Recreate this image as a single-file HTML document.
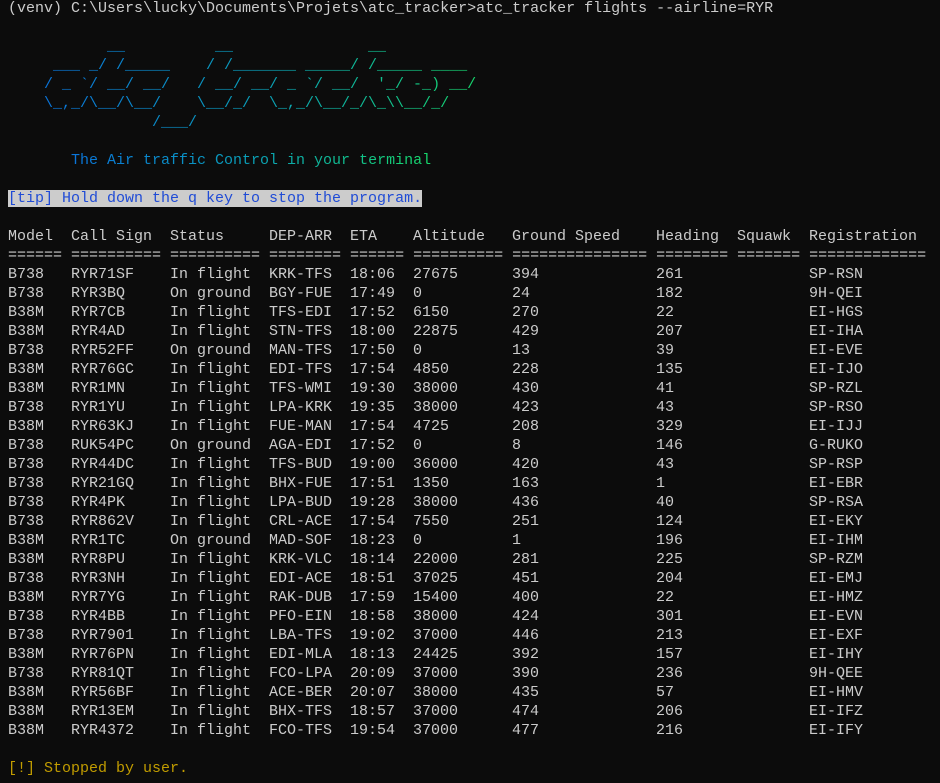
<!DOCTYPE html>
<html><head><meta charset="utf-8"><style>
html,body{margin:0;padding:0;background:#0c0c0c;}
body{width:940px;height:783px;overflow:hidden;}
.t{position:absolute;left:8px;top:-1px;font-family:"Liberation Mono",monospace;font-size:15px;line-height:19px;color:#cccccc;white-space:normal;}
.l{height:19px;white-space:pre;}
.g{background:linear-gradient(90deg,#0a74da 0%,#0aa0b8 50%,#17d86a 100%);-webkit-background-clip:text;background-clip:text;color:transparent;display:inline-block;white-space:pre;}
.tip{background:#cccccc;color:#1f4bd6;}
.r span{display:inline-block;}
.a{width:63px}.b{width:99px}.c{width:99px}.d{width:81px}.e{width:63px}.f{width:99px}.h{width:144px}.i{width:81px}.j{width:72px}
.y{color:#c19c00;}
</style></head><body><div class="t"><div class="l">(venv) C:\Users\lucky\Documents\Projets\atc_tracker&gt;atc_tracker flights --airline=RYR</div><div class="l"></div><div class="g" style="margin-left:36px;width:440px;display:block;">       __          __               __
 ___ _/ /_____    / /_______ _____/ /_____ ____
/ _ `/ __/ __/   / __/ __/ _ `/ __/  '_/ -_) __/
\_,_/\__/\__/    \__/_/  \_,_/\__/_/\_\\__/_/
            /___/</div><div class="l"></div><div class="l">       <span class="g">The Air traffic Control in your terminal</span></div><div class="l"></div><div class="l"><span class="tip">[tip] Hold down the q key to stop the program.</span></div><div class="l"></div><div class="l r"><span class="a">Model</span><span class="b">Call Sign</span><span class="c">Status</span><span class="d">DEP-ARR</span><span class="e">ETA</span><span class="f">Altitude</span><span class="h">Ground Speed</span><span class="i">Heading</span><span class="j">Squawk</span><span>Registration</span></div><div class="l">====== ========== ========== ======== ====== ========== =============== ======== ======= =============</div><div class="l r"><span class="a">B738</span><span class="b">RYR71SF</span><span class="c">In flight</span><span class="d">KRK-TFS</span><span class="e">18:06</span><span class="f">27675</span><span class="h">394</span><span class="i">261</span><span class="j"></span><span>SP-RSN</span></div><div class="l r"><span class="a">B738</span><span class="b">RYR3BQ</span><span class="c">On ground</span><span class="d">BGY-FUE</span><span class="e">17:49</span><span class="f">0</span><span class="h">24</span><span class="i">182</span><span class="j"></span><span>9H-QEI</span></div><div class="l r"><span class="a">B38M</span><span class="b">RYR7CB</span><span class="c">In flight</span><span class="d">TFS-EDI</span><span class="e">17:52</span><span class="f">6150</span><span class="h">270</span><span class="i">22</span><span class="j"></span><span>EI-HGS</span></div><div class="l r"><span class="a">B38M</span><span class="b">RYR4AD</span><span class="c">In flight</span><span class="d">STN-TFS</span><span class="e">18:00</span><span class="f">22875</span><span class="h">429</span><span class="i">207</span><span class="j"></span><span>EI-IHA</span></div><div class="l r"><span class="a">B738</span><span class="b">RYR52FF</span><span class="c">On ground</span><span class="d">MAN-TFS</span><span class="e">17:50</span><span class="f">0</span><span class="h">13</span><span class="i">39</span><span class="j"></span><span>EI-EVE</span></div><div class="l r"><span class="a">B38M</span><span class="b">RYR76GC</span><span class="c">In flight</span><span class="d">EDI-TFS</span><span class="e">17:54</span><span class="f">4850</span><span class="h">228</span><span class="i">135</span><span class="j"></span><span>EI-IJO</span></div><div class="l r"><span class="a">B38M</span><span class="b">RYR1MN</span><span class="c">In flight</span><span class="d">TFS-WMI</span><span class="e">19:30</span><span class="f">38000</span><span class="h">430</span><span class="i">41</span><span class="j"></span><span>SP-RZL</span></div><div class="l r"><span class="a">B738</span><span class="b">RYR1YU</span><span class="c">In flight</span><span class="d">LPA-KRK</span><span class="e">19:35</span><span class="f">38000</span><span class="h">423</span><span class="i">43</span><span class="j"></span><span>SP-RSO</span></div><div class="l r"><span class="a">B38M</span><span class="b">RYR63KJ</span><span class="c">In flight</span><span class="d">FUE-MAN</span><span class="e">17:54</span><span class="f">4725</span><span class="h">208</span><span class="i">329</span><span class="j"></span><span>EI-IJJ</span></div><div class="l r"><span class="a">B738</span><span class="b">RUK54PC</span><span class="c">On ground</span><span class="d">AGA-EDI</span><span class="e">17:52</span><span class="f">0</span><span class="h">8</span><span class="i">146</span><span class="j"></span><span>G-RUKO</span></div><div class="l r"><span class="a">B738</span><span class="b">RYR44DC</span><span class="c">In flight</span><span class="d">TFS-BUD</span><span class="e">19:00</span><span class="f">36000</span><span class="h">420</span><span class="i">43</span><span class="j"></span><span>SP-RSP</span></div><div class="l r"><span class="a">B738</span><span class="b">RYR21GQ</span><span class="c">In flight</span><span class="d">BHX-FUE</span><span class="e">17:51</span><span class="f">1350</span><span class="h">163</span><span class="i">1</span><span class="j"></span><span>EI-EBR</span></div><div class="l r"><span class="a">B738</span><span class="b">RYR4PK</span><span class="c">In flight</span><span class="d">LPA-BUD</span><span class="e">19:28</span><span class="f">38000</span><span class="h">436</span><span class="i">40</span><span class="j"></span><span>SP-RSA</span></div><div class="l r"><span class="a">B738</span><span class="b">RYR862V</span><span class="c">In flight</span><span class="d">CRL-ACE</span><span class="e">17:54</span><span class="f">7550</span><span class="h">251</span><span class="i">124</span><span class="j"></span><span>EI-EKY</span></div><div class="l r"><span class="a">B38M</span><span class="b">RYR1TC</span><span class="c">On ground</span><span class="d">MAD-SOF</span><span class="e">18:23</span><span class="f">0</span><span class="h">1</span><span class="i">196</span><span class="j"></span><span>EI-IHM</span></div><div class="l r"><span class="a">B38M</span><span class="b">RYR8PU</span><span class="c">In flight</span><span class="d">KRK-VLC</span><span class="e">18:14</span><span class="f">22000</span><span class="h">281</span><span class="i">225</span><span class="j"></span><span>SP-RZM</span></div><div class="l r"><span class="a">B738</span><span class="b">RYR3NH</span><span class="c">In flight</span><span class="d">EDI-ACE</span><span class="e">18:51</span><span class="f">37025</span><span class="h">451</span><span class="i">204</span><span class="j"></span><span>EI-EMJ</span></div><div class="l r"><span class="a">B38M</span><span class="b">RYR7YG</span><span class="c">In flight</span><span class="d">RAK-DUB</span><span class="e">17:59</span><span class="f">15400</span><span class="h">400</span><span class="i">22</span><span class="j"></span><span>EI-HMZ</span></div><div class="l r"><span class="a">B738</span><span class="b">RYR4BB</span><span class="c">In flight</span><span class="d">PFO-EIN</span><span class="e">18:58</span><span class="f">38000</span><span class="h">424</span><span class="i">301</span><span class="j"></span><span>EI-EVN</span></div><div class="l r"><span class="a">B738</span><span class="b">RYR7901</span><span class="c">In flight</span><span class="d">LBA-TFS</span><span class="e">19:02</span><span class="f">37000</span><span class="h">446</span><span class="i">213</span><span class="j"></span><span>EI-EXF</span></div><div class="l r"><span class="a">B38M</span><span class="b">RYR76PN</span><span class="c">In flight</span><span class="d">EDI-MLA</span><span class="e">18:13</span><span class="f">24425</span><span class="h">392</span><span class="i">157</span><span class="j"></span><span>EI-IHY</span></div><div class="l r"><span class="a">B738</span><span class="b">RYR81QT</span><span class="c">In flight</span><span class="d">FCO-LPA</span><span class="e">20:09</span><span class="f">37000</span><span class="h">390</span><span class="i">236</span><span class="j"></span><span>9H-QEE</span></div><div class="l r"><span class="a">B38M</span><span class="b">RYR56BF</span><span class="c">In flight</span><span class="d">ACE-BER</span><span class="e">20:07</span><span class="f">38000</span><span class="h">435</span><span class="i">57</span><span class="j"></span><span>EI-HMV</span></div><div class="l r"><span class="a">B38M</span><span class="b">RYR13EM</span><span class="c">In flight</span><span class="d">BHX-TFS</span><span class="e">18:57</span><span class="f">37000</span><span class="h">474</span><span class="i">206</span><span class="j"></span><span>EI-IFZ</span></div><div class="l r"><span class="a">B38M</span><span class="b">RYR4372</span><span class="c">In flight</span><span class="d">FCO-TFS</span><span class="e">19:54</span><span class="f">37000</span><span class="h">477</span><span class="i">216</span><span class="j"></span><span>EI-IFY</span></div><div class="l"></div><div class="l y">[!] Stopped by user.</div></div></body></html>
